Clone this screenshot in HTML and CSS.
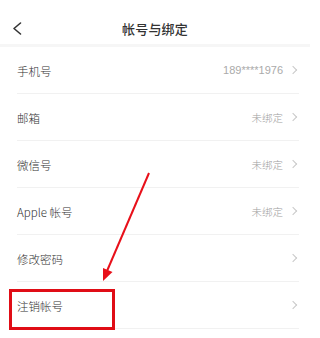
FILE: index.html
```html
<!DOCTYPE html>
<html lang="zh-CN">
<head>
<meta charset="utf-8">
<link rel="stylesheet" href="styles.css">
</head>
<body>
<div class="page">
  <header class="nav">
    <svg class="back" width="12" height="16" viewBox="0 0 12 16"><path d="M8.5 2 L2 7.5 L8.5 13" fill="none" stroke="#333" stroke-width="1.6" stroke-linecap="round" stroke-linejoin="round"/></svg>
    <div class="title">帐号与绑定</div>
  </header>
  <ul class="list">
    <li class="row"><span class="label">手机号</span><span class="value num">189****1976</span><span class="chev"></span></li>
    <li class="row"><span class="label">邮箱</span><span class="value">未绑定</span><span class="chev"></span></li>
    <li class="row"><span class="label">微信号</span><span class="value">未绑定</span><span class="chev"></span></li>
    <li class="row"><span class="label">Apple 帐号</span><span class="value">未绑定</span><span class="chev"></span></li>
    <li class="row"><span class="label">修改密码</span><span class="value"></span><span class="chev"></span></li>
    <li class="row"><span class="label">注销帐号</span><span class="value"></span><span class="chev"></span></li>
  </ul>
  <svg class="arrow" width="310" height="338" viewBox="0 0 310 338">
    <line x1="149" y1="173" x2="107" y2="271" stroke="#e8101a" stroke-width="2"/>
    <polygon points="103,281 103,268 112.5,272" fill="#e8101a"/>
  </svg>
  <div class="highlight"></div>
</div>
</body>
</html>
```
FILE: styles.css
```css
html, body {
  margin: 0;
  padding: 0;
  background: #fff;
}
body {
  font-family: "Noto Sans CJK SC", "Noto Sans", sans-serif;
  color: #333;
}
.page {
  position: relative;
  width: 310px;
  height: 338px;
  overflow: hidden;
}
.nav {
  position: relative;
  height: 44px;
  display: flex;
  align-items: center;
  justify-content: center;
  border-bottom: 3px solid #f6f6f6;
}
.back {
  position: absolute;
  left: 12px;
  top: 21px;
}
.title {
  font-size: 13px;
  font-weight: 500;
  color: #333;
  margin-top: 12px;
  letter-spacing: 0.2px;
}
.list {
  list-style: none;
  margin: 0;
  padding: 0;
}
.row {
  height: 46px;
  margin: 0 11px 0 17px;
  border-bottom: 1px solid #f1f1f1;
  display: flex;
  align-items: center;
}
.label {
  flex: 1;
  font-size: 11.5px;
  font-weight: 300;
  color: #333;
  margin-top: 1px;
}
.value {
  font-size: 10.5px;
  font-weight: 300;
  color: #a0a0a0;
  margin-right: 7px;
}
.value.num {
  font-family: "Liberation Sans", Arial, sans-serif;
  font-size: 11px;
  font-weight: 400;
  color: #aaa;
}
.chev {
  width: 5px;
  height: 5px;
  border-top: 1px solid #c8c8c8;
  border-right: 1px solid #c8c8c8;
  transform: rotate(45deg);
  margin-right: 3px;
}
.arrow {
  position: absolute;
  left: 0;
  top: 0;
  pointer-events: none;
}
.highlight {
  position: absolute;
  left: 9px;
  top: 289px;
  width: 100px;
  height: 35px;
  border: 3px solid #e00d16;
}
```
